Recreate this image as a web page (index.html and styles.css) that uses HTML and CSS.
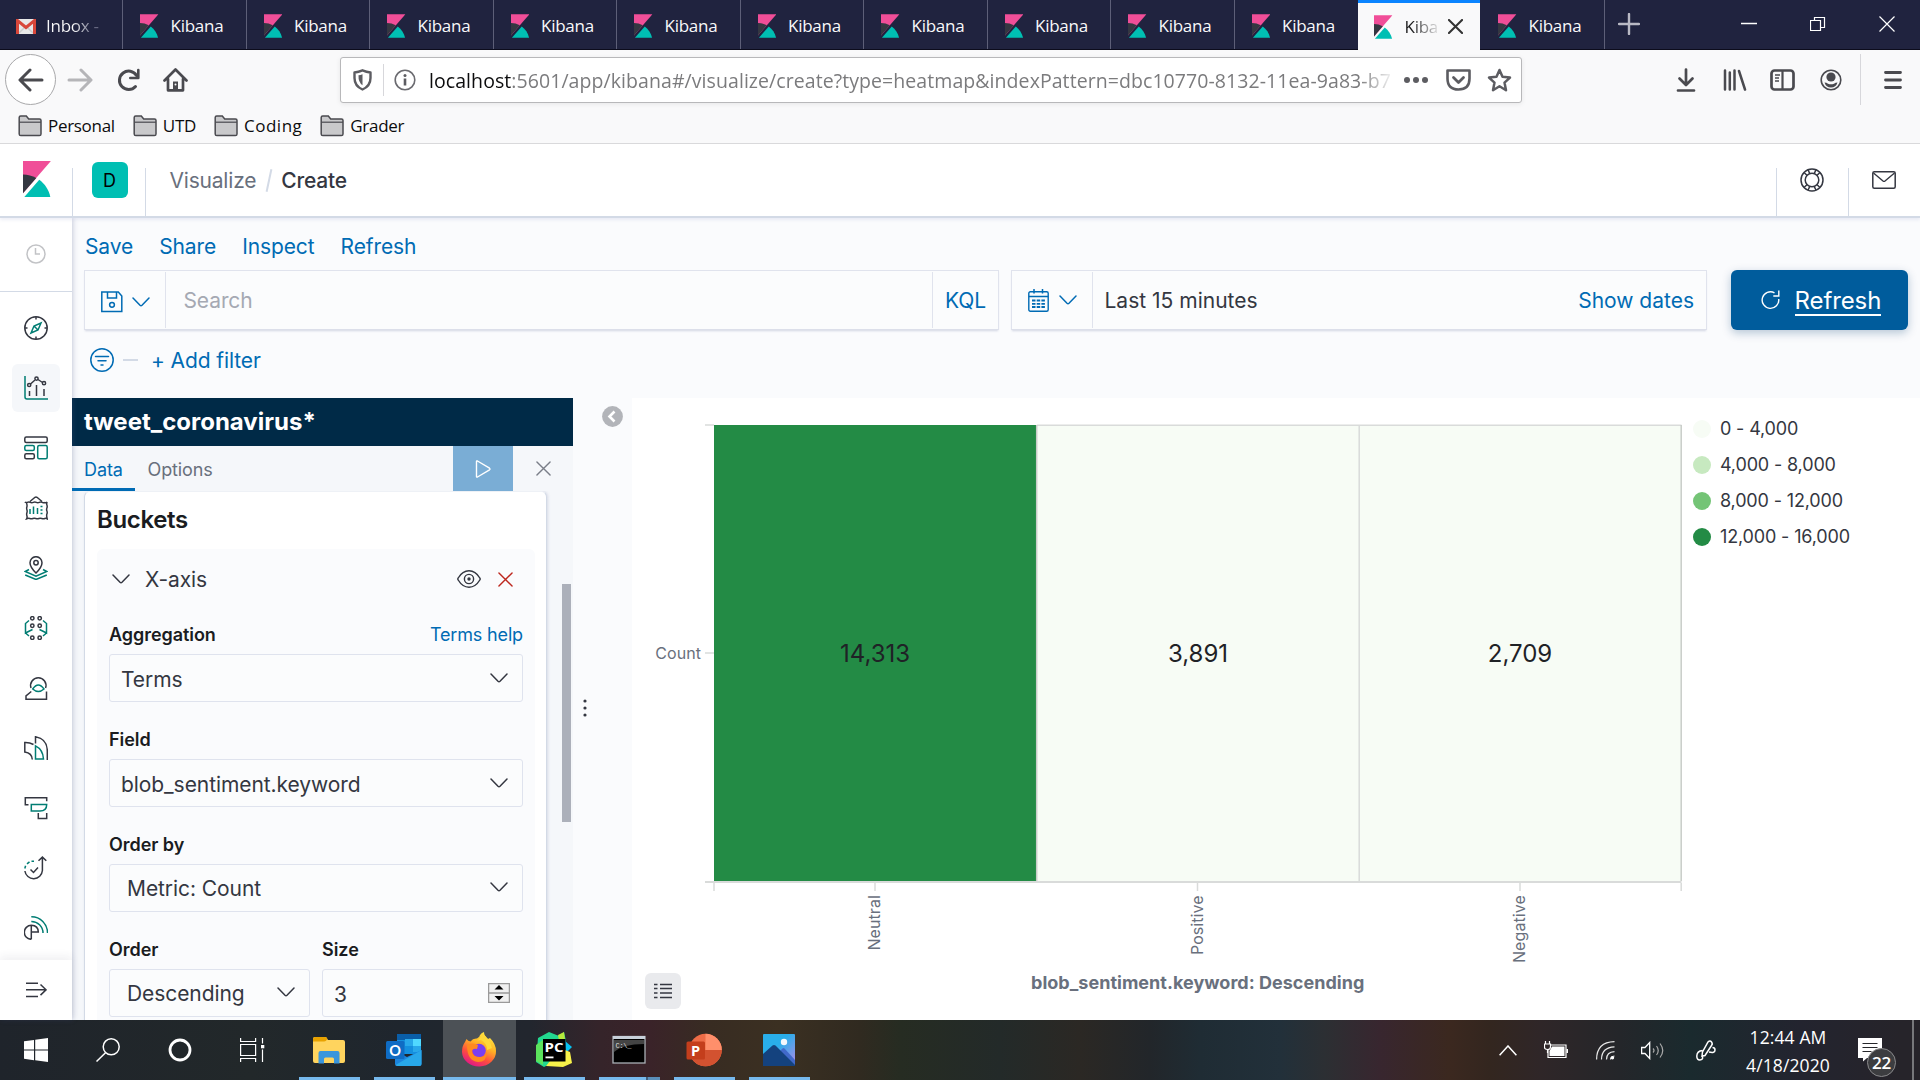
FILE: index.html
```html
<!DOCTYPE html>
<html lang="en">
<head>
<meta charset="utf-8">
<title>Create - Kibana</title>
<link rel="stylesheet" href="styles.css">
</head>
<body>
<svg width="0" height="0" class="defs" aria-hidden="true">
  <symbol id="kibana" viewBox="4 0 25 32">
    <path fill="#f04e98" d="M4 0v28.8L28.9 0z"/>
    <path fill="#343741" d="M4 12v16.8l11.9-13.7A24.7 24.7 0 0 0 4 12"/>
    <path fill="#00bfb3" d="M18.500 16.700 5.200 32h23.200c-1.300-6.300-4.900-11.700-9.900-15.300"/>
  </symbol>
  <symbol id="folder" viewBox="0 0 24 22">
    <path d="M1.200 19V2.500q0-1.500 1.500-1.500h5.600l2.400 3H21.500q1.500 0 1.500 1.500V19q0 1.600-1.600 1.600H2.800Q1.200 20.600 1.200 19Z" fill="#c9c9cb" stroke="#4a4a4f" stroke-width="1.500"/>
    <path d="M1.500 7.200H23" stroke="#4a4a4f" stroke-width="1.200"/>
  </symbol>
  <symbol id="chev" viewBox="0 0 18 10"><path d="M1 1l7 7.300q1 .9 2 0L17 1" fill="none" stroke="currentColor" stroke-width="1.500" stroke-linecap="round"/></symbol>
  <symbol id="cross" viewBox="0 0 16 16"><path d="M1 1l14 14M15 1L1 15" fill="none" stroke="currentColor" stroke-linecap="round"/></symbol>
</svg>

<header class="tabs">
  <div class="tab first"><svg class="gm" viewBox="0 0 20 15"><rect width="20" height="15" rx="1" fill="#e8e8e8"/><path d="M3 14l7-7 7 7" fill="none" stroke="#ccc"/><path d="M1.500 15V1.500L10 8.500l8.500-7V15" fill="none" stroke="#d8473a" stroke-width="3"/></svg><span class="fade">Inbox -</span></div>
  <div class="tab"><svg><use href="#kibana"/></svg><span>Kibana</span></div>
  <div class="tab"><svg><use href="#kibana"/></svg><span>Kibana</span></div>
  <div class="tab"><svg><use href="#kibana"/></svg><span>Kibana</span></div>
  <div class="tab"><svg><use href="#kibana"/></svg><span>Kibana</span></div>
  <div class="tab"><svg><use href="#kibana"/></svg><span>Kibana</span></div>
  <div class="tab"><svg><use href="#kibana"/></svg><span>Kibana</span></div>
  <div class="tab"><svg><use href="#kibana"/></svg><span>Kibana</span></div>
  <div class="tab"><svg><use href="#kibana"/></svg><span>Kibana</span></div>
  <div class="tab"><svg><use href="#kibana"/></svg><span>Kibana</span></div>
  <div class="tab last-dark"><svg><use href="#kibana"/></svg><span>Kibana</span></div>
  <div class="tab active"><svg><use href="#kibana"/></svg><span class="cut">Kibana</span><svg class="x"><use href="#cross"/></svg></div>
  <div class="tab end"><svg><use href="#kibana"/></svg><span>Kibana</span></div>
  <svg class="plus" viewBox="0 0 22 22"><path d="M11 1v20M1 11h20" stroke="#b9b9c4" stroke-width="2.400" stroke-linecap="round"/></svg>
  <div class="winctl">
    <svg width="16" height="16" viewBox="0 0 16 16"><path d="M0 7.500h16" stroke="#fff"/></svg>
    <svg width="16" height="16" viewBox="0 0 16 16"><path d="M.5 4.500h10v10H.5zM4.500 4.500v-3h10v10h-4" fill="none" stroke="#fff" stroke-width="1.200"/></svg>
    <svg width="16" height="16" viewBox="0 0 16 16"><path d="M.5 .5l15 15M15.500 .5l-15 15" stroke="#fff" stroke-width="1.200"/></svg>
  </div>
</header>

<div class="chrome">
  <div class="toolbar">
    <div class="back"><svg width="26" height="24" viewBox="0 0 26 24"><path d="M12 2L2 12l10 10M2.500 12H24" fill="none" stroke="#4a4a4f" stroke-width="3" stroke-linecap="round" stroke-linejoin="round"/></svg></div>
    <svg class="fwd" width="26" height="24" viewBox="0 0 26 24"><path d="M14 2l10 10-10 10M23.500 12H2" fill="none" stroke="#b5b5b8" stroke-width="3" stroke-linecap="round" stroke-linejoin="round"/></svg>
    <svg class="reload" width="25" height="24" viewBox="0 0 25 24"><path d="M19.500 18.500a9.200 9.200 0 1 1 1-11" fill="none" stroke="#4a4a4f" stroke-width="3" stroke-linecap="round"/><path d="M22.300 2v8h-8" fill="none" stroke="#4a4a4f" stroke-width="2.600" stroke-linecap="round" stroke-linejoin="round"/></svg>
    <svg class="home" width="25" height="24" viewBox="0 0 25 24"><path d="M1.500 12.500L12.500 1.500l11 11M5 11v11.300h15V11" fill="none" stroke="#4a4a4f" stroke-width="2.700" stroke-linecap="round" stroke-linejoin="round"/><path d="M10 22v-8.500h5V22z" fill="#4a4a4f"/><circle cx="12.500" cy="16.500" r="1" fill="#f9f9fa"/></svg>
    <div class="url">
      <svg class="shield" width="19" height="22" viewBox="0 0 19 22"><path d="M1.500 3.500Q5.500 3 9.500 1.300 13.500 3 17.500 3.500V9q0 8-8 11.500Q1.500 17 1.500 9Z" fill="none" stroke="#5c5c61" stroke-width="2.400" stroke-linejoin="round"/><path d="M9.500 5.200q-2 .9-4 1.100-.3 7 4 10z" fill="#5c5c61"/></svg>
      <i></i>
      <svg class="info" width="22" height="22" viewBox="0 0 22 22"><circle cx="11" cy="11" r="9.800" fill="none" stroke="#6b6b70" stroke-width="1.600"/><circle cx="11" cy="6.400" r="1.500" fill="#5c5c61"/><path d="M11 9.500v7" stroke="#5c5c61" stroke-width="2.600"/></svg>
      <div class="addr"><b>localhost</b>:5601/app/kibana#/visualize/create?type=heatmap&amp;indexPattern=dbc10770-8132-11ea-9a83-b7</div>
      <svg class="dots" width="26" height="8" viewBox="0 0 26 8"><g fill="#5c5c61"><circle cx="4" cy="4" r="3"/><circle cx="13" cy="4" r="3"/><circle cx="22" cy="4" r="3"/></g></svg>
      <svg class="pocket" width="25" height="22" viewBox="0 0 25 22"><path d="M1.500 1.500h22v8q0 11-11 11t-11-11z" fill="none" stroke="#5c5c61" stroke-width="2.600" stroke-linejoin="round"/><path d="M7.500 8.500l5 5 5-5" fill="none" stroke="#5c5c61" stroke-width="2.800" stroke-linecap="round" stroke-linejoin="round"/></svg>
      <svg class="star" width="25" height="24" viewBox="0 0 25 24"><path d="M12.500 2l3 6.800 7.500.8-5.500 5 1.500 7.600-6.500-3.900L6 22.200l1.500-7.600L2 9.600l7.500-.8z" fill="none" stroke="#5c5c61" stroke-width="2.500" stroke-linejoin="round"/></svg>
    </div>
    <div class="tools">
      <svg width="20" height="24" viewBox="0 0 20 24"><path d="M10 1.500v15M3.500 10.500l6.500 6.500 6.500-6.500M2 22.500h16" fill="none" stroke="#4a4a4f" stroke-width="2.700" stroke-linecap="round" stroke-linejoin="round"/></svg>
      <svg width="24" height="22" viewBox="0 0 24 22"><path d="M2 1.500v19M6.800 3.500v17M11.500 1.500v19M16 2l6 18.500" fill="none" stroke="#4a4a4f" stroke-width="2.500" stroke-linecap="round"/></svg>
      <svg width="25" height="22" viewBox="0 0 25 22"><rect x="1.500" y="1.500" width="22" height="19" rx="3" fill="none" stroke="#4a4a4f" stroke-width="2.700"/><path d="M12.500 1v20" stroke="#4a4a4f" stroke-width="2.200"/><path d="M5 6h5M5 9h4M5 12h4" stroke="#4a4a4f" stroke-width="1.400"/></svg>
      <svg width="22" height="22" viewBox="0 0 22 22"><circle cx="11" cy="11" r="9.800" fill="none" stroke="#4a4a4f" stroke-width="1.600"/><circle cx="11" cy="8" r="4.600" fill="#4a4a4f"/><path d="M4.500 13.500q2 0 3.500 1.200 3 1.300 6 0 1.500-1.200 3.500-1.200-1.500 5-6.500 5t-6.500-5z" fill="#4a4a4f"/></svg>
      <i></i>
      <svg width="18" height="20" viewBox="0 0 18 20"><path d="M1.500 2.500h15M1.500 10h15M1.500 17.500h15" stroke="#4a4a4f" stroke-width="2.800" stroke-linecap="round"/></svg>
    </div>
  </div>
  <div class="bookmarks">
    <div class="bm"><svg><use href="#folder"/></svg><span>Personal</span></div>
    <div class="bm"><svg><use href="#folder"/></svg><span>UTD</span></div>
    <div class="bm wide"><svg><use href="#folder"/></svg><span>Coding</span></div>
    <div class="bm"><svg><use href="#folder"/></svg><span>Grader</span></div>
  </div>
</div>

<div class="khead">
  <div class="klogo"><svg><use href="#kibana"/></svg></div>
  <div class="space"><span>D</span></div>
  <div class="crumbs"><span class="c1">Visualize</span><em></em><span class="c2">Create</span></div>
  <div class="hbtn"><svg width="24" height="24" viewBox="0 0 24 24"><g fill="none" stroke="#343741" stroke-width="1.500"><circle cx="12" cy="12" r="11"/><circle cx="12" cy="12" r="6.800"/><path d="M8 1.800l1.800 3.800M4 4.500l3.200 3M16 1.800l-1.800 3.800M20 4.500l-3.200 3M4 19.500l3.200-3M8 22.200l1.800-3.800M20 19.500l-3.200-3M16 22.200l-1.800-3.800"/></g></svg></div>
  <div class="hbtn"><svg width="24" height="18" viewBox="0 0 24 18"><rect x=".8" y=".8" width="22.400" height="16.400" rx="1.500" fill="none" stroke="#343741" stroke-width="1.500"/><path d="M1.500 2l9.500 8q1 .8 2 0l9.500-8" fill="none" stroke="#343741" stroke-width="1.400"/></svg></div>
</div>

<div class="app">
  <nav class="side">
    <div class="recent"><svg width="20" height="20" viewBox="0 0 20 20"><circle cx="10" cy="10" r="9" fill="none" stroke="#c2c3c6" stroke-width="1.500"/><path d="M9.500 4v6h4.500" fill="none" stroke="#c2c3c6" stroke-width="1.500"/></svg></div>
    <div class="navs">
      <a><svg viewBox="0 0 24 24"><circle cx="12" cy="12" r="11.200"/><path d="M12 1v2.500M12 20.500V23M1 12h2.500M20.500 12H23"/><path class="t" d="M17 7l-3 7-7 3 3-7zM10 10l4 4"/></svg></a>
      <a class="on"><svg viewBox="0 0 24 24"><path class="t" d="M1 0v21q0 2 2 2h21"/><path d="M5.500 15v5M12.500 9v11M20 13v7M6.500 8l4.500-4M14 3.500l4.500 3"/><circle cx="5.200" cy="9" r="1.600"/><circle cx="12.500" cy="2.600" r="1.600"/><circle cx="20" cy="7.200" r="1.600"/></svg></a>
      <a><svg viewBox="0 0 24 24"><rect x=".8" y="1" width="22.400" height="5.500" rx="1.500"/><rect class="t" x=".8" y="9.500" width="9.500" height="5" rx="1.500"/><rect x=".8" y="17.800" width="9.500" height="5" rx="1.500"/><rect class="t" x="13.700" y="9.500" width="9.500" height="13.300" rx="1.500"/></svg></a>
      <a><svg viewBox="0 0 24 24"><path d="M.8 6q1.200 1 2.500.300 1.500-.8 3 0t3 0 3 0 3 0 3 0 2.500.3q1.200.3 2.400-.6-.9 1.500-.3 3t0 3 0 3 0 3 .3 4.800q-1.200-.8-2.400-.3t-3 0-3 0-3 0-3 0-3 0-3.200.3q.8-1.500.300-3t0-3 0-3 0-3-.6-4.500M6 5.500l5-4.200q1-.8 2 0l5 4.200"/><path class="t" d="M6 13v5M9.500 10.500V18M13.500 12v6M16.500 10.500h2M16.500 14h2M16.500 17.500h2"/></svg></a>
      <a><svg viewBox="0 0 24 24"><path d="M12 17Q6 11 6 6.700a6 6 0 0 1 12 0Q18 11 12 17z"/><circle cx="12" cy="6.800" r="2.200"/><path class="t" d="M5 13.500L1.200 15.500 12 20.200l10.800-4.700L19 13.500M1.200 19L12 23.500 22.800 19"/></svg></a>
      <a><svg viewBox="0 0 24 24"><circle cx="8.300" cy="2.300" r="1.700"/><circle cx="15.700" cy="2.300" r="1.700"/><circle cx="8.300" cy="9.700" r="1.700"/><circle cx="15.700" cy="9.700" r="1.700"/><circle cx="8.300" cy="21.700" r="1.700"/><circle cx="15.700" cy="21.700" r="1.700"/><path class="t" d="M5 4.500L1.500 7.500V17l7-3.500M1.500 17L5 20M19 4.500l3.500 3V17l-7-3.500M22.500 17L19 20"/></svg></a>
      <a><svg viewBox="0 0 24 24"><path d="M7 12a7.700 7.700 0 1 1 14.600 0M7.300 15.500L2 19.800v3.400h20.500V15.500"/><path class="t" d="M8.700 13q5.600-8 11.300 0-5.700 5-11.300 0z"/></svg></a>
      <a><svg viewBox="0 0 24 24"><path d="M9.500 8.500Q5.500 6.300 .8 6.500V16Q8 17 8.300 23.500M11.500 7.500V.8Q23.300 3 23.300 15v9"/><path class="t" d="M11.500 9.800Q19 13.500 19.500 23h-8z"/></svg></a>
      <a><svg viewBox="0 0 24 24"><path d="M4.500 8.700H1.300V1.700H22.700V5.200M14.300 17v5.500h8.400V17"/><path class="t" d="M7.300 8.500h15.400q0 6.500-6.700 6.500H7.300z"/></svg></a>
      <a><svg viewBox="0 0 24 24"><path d="M14.500 4.800l3.900-3.700 3.900 3.700M18.400 1.500v13A8.800 8.800 0 0 1 .9 15M6.500 13.500l3 3 4.500-5"/><path class="t" d="M.8 12.500l.8-2.800M3 7.800l2.500-2M7.500 5.200H10"/></svg></a>
      <a><svg viewBox="0 0 24 24"><path d="M7.300 9.300a7 7 0 1 0 0 14M7.300 9.300v14M7.300 9.300q7 .3 7 6.800h-7"/><path class="t" d="M7.300.8A16 16 0 0 1 23.500 17M7.300 5.500A11.500 11.500 0 0 1 19 17"/></svg></a>
    </div>
    <div class="collapse"><svg width="22" height="16" viewBox="0 0 22 16"><path d="M1 1.200h12M1 7.800h20M1 14.500h12M15.500 2.500l5.500 5.300-5.500 5.300" fill="none" stroke="#343741" stroke-width="1.500"/></svg></div>
  </nav>

  <main>
    <div class="menu"><a>Save</a><a>Share</a><a>Inspect</a><a>Refresh</a></div>
    <div class="query">
      <div class="box search">
        <div class="pre"><svg class="sv" width="22" height="22" viewBox="0 0 22 22"><path d="M.8 1h16.500l3.500 4v15.500H.8zM6.500 1v6h9V1" fill="none" stroke="#006bb4" stroke-width="1.500"/><circle cx="11" cy="13.800" r="2.400" fill="none" stroke="#006bb4" stroke-width="1.500"/></svg><svg class="ch"><use href="#chev"/></svg></div>
        <div class="ph">Search</div>
        <div class="kql">KQL</div>
      </div>
      <div class="box date">
        <div class="pre"><svg class="cal" width="21" height="23" viewBox="0 0 21 23"><rect x=".8" y="2.800" width="19.400" height="19.400" rx="1.500" fill="none" stroke="#006bb4" stroke-width="1.400"/><path d="M.8 7.500h19.400M6 0v4.500M14.500 0v4.500" stroke="#006bb4" stroke-width="1.500"/><path d="M4 11.500h13M4 14.800h13M4 18h13" stroke="#006bb4" stroke-width="1.800" stroke-dasharray="3.500 1.200"/></svg><svg class="ch"><use href="#chev"/></svg></div>
        <div class="rng">Last 15 minutes</div>
        <div class="show">Show dates</div>
      </div>
      <button class="go"><svg width="19" height="20" viewBox="0 0 19 20"><path d="M13.500 2.800A8.300 8.300 0 1 0 17.700 9M17.800 .5v5.500h-5.500" fill="none" stroke="#fff" stroke-width="1.400"/></svg><span>Refresh</span></button>
    </div>
    <div class="filter"><svg width="24" height="24" viewBox="0 0 24 24"><g fill="none" stroke="#006bb4" stroke-width="1.500" stroke-linecap="round"><circle cx="12" cy="12" r="11.200"/><path d="M5.500 8.500h13M8 12.800h8M11 17h2"/></g></svg><i></i><a>+ Add filter</a></div>

    <div class="work">
      <section class="editor">
        <h1>tweet_coronavirus*</h1>
        <div class="etabs"><a class="sel">Data</a><a class="opt">Options</a><div class="play"><svg width="16" height="18" viewBox="0 0 16 18"><path d="M1.500 1.500q0-1 1-.5l12 7.200q1 .8 0 1.600l-12 7.200q-1 .5-1-.5z" fill="none" stroke="#fff" stroke-width="1.400"/></svg></div><svg class="cl"><use href="#cross"/></svg></div>
        <div class="ebody">
          <div class="card">
            <h2>Buckets</h2>
            <div class="agg">
              <div class="ah"><svg class="ch"><use href="#chev"/></svg><span>X-axis</span><svg class="eye" width="24" height="18" viewBox="0 0 24 18"><g fill="none" stroke="#343741" stroke-width="1.400"><path d="M1.200 10q-.8-1 0-2Q5.500 .8 12 .8t10.800 7.200q.8 1 0 2-4.300 7.200-10.800 7.200T1.200 10z"/><circle cx="12" cy="9" r="4.600"/></g><circle cx="12" cy="9" r="1.700" fill="#343741"/></svg><svg class="del"><use href="#cross"/></svg></div>
              <div class="lab"><b>Aggregation</b><a>Terms help</a></div>
              <div class="sel1"><span>Terms</span><svg class="ch"><use href="#chev"/></svg></div>
              <div class="lab"><b>Field</b></div>
              <div class="sel1"><span>blob_sentiment.keyword</span><svg class="ch"><use href="#chev"/></svg></div>
              <div class="lab"><b>Order by</b></div>
              <div class="sel1 nat"><span>Metric: Count</span><svg class="ch"><use href="#chev"/></svg></div>
              <div class="two">
                <div><div class="lab"><b>Order</b></div><div class="sel1 nat"><span>Descending</span><svg class="ch"><use href="#chev"/></svg></div></div>
                <div><div class="lab"><b>Size</b></div><div class="sel1 num"><span>3</span><svg width="22" height="20" viewBox="0 0 22 20"><rect x=".5" y=".5" width="21" height="19" fill="#f0f0f0" stroke="#9a9a9a"/><path d="M0 10h22" stroke="#9a9a9a" stroke-width="1.500"/><path d="M6.500 6.500L11 2l4.500 4.500zM6.500 13L11 17.500 15.500 13z" fill="#000"/></svg></div></div>
              </div>
            </div>
          </div>
          <div class="thumb"></div>
        </div>
      </section>
      <div class="gutter"><svg class="coll" width="21" height="21" viewBox="0 0 21 21"><circle cx="10.500" cy="10.500" r="10.400" fill="#b2b4b9"/><path d="M12.500 5.500l-5 5 5 5" fill="none" stroke="#fff" stroke-width="2.600"/></svg><svg class="grip" width="4" height="18" viewBox="0 0 4 18"><g fill="#343741"><circle cx="2" cy="2" r="1.600"/><circle cx="2" cy="9" r="1.600"/><circle cx="2" cy="16" r="1.600"/></g></svg></div>
      <section class="vis">
        <svg class="chart" width="1050" height="622" viewBox="632 398 1050 622">
          <rect x="714" y="425" width="323" height="456" fill="#238b45"/>
          <rect x="1037" y="425" width="644.500" height="456" fill="#f7fcf5"/>
          <g stroke="#d9dbda" stroke-width="1.500" fill="none">
            <path d="M705 425h9M705 653h9M1359.200 425v456M714 883v8M875 883v8M1197.500 883v8M1520 883v8M1681.200 883v8"/>
            <path d="M1037 425.300h644.500"/>
            <path stroke="#c9cdc9" d="M1681.200 425v456M1036.700 425v456"/>
            <path stroke-width="2" d="M705 882h976.500"/>
          </g>
          <g class="ax">
            <text x="701" y="659" text-anchor="end">Count</text>
            <text transform="translate(880 950.500) rotate(-90)">Neutral</text>
            <text transform="translate(1203 955) rotate(-90)">Positive</text>
            <text transform="translate(1525 963) rotate(-90)">Negative</text>
          </g>
          <g class="val" text-anchor="middle">
            <text x="875" y="662">14,313</text><text x="1198" y="662">3,891</text><text x="1520" y="662">2,709</text>
          </g>
          <text class="ttl" x="1197.700" y="989" text-anchor="middle">blob_sentiment.keyword: Descending</text>
        </svg>
        <ul class="legend">
          <li><i style="background:#f7fcf5"></i><span>0 - 4,000</span></li>
          <li><i style="background:#c7e9c0"></i><span>4,000 - 8,000</span></li>
          <li><i style="background:#74c476"></i><span>8,000 - 12,000</span></li>
          <li><i style="background:#238b45"></i><span>12,000 - 16,000</span></li>
        </ul>
        <div class="lbtn"><svg width="18" height="16" viewBox="0 0 18 16"><path d="M0 1.500h3.500M6 1.500h12M0 5.500h3.500M6 5.500h12M0 10h3.500M6 10h12M0 14.500h3.500M6 14.500h12" stroke="#343741" stroke-width="1.300"/></svg></div>
      </section>
    </div>
  </main>
</div>

<footer class="task">
  <div class="sys"><svg width="24" height="24" viewBox="0 0 24 24"><path fill="#fff" d="M0 3.300l10-1.400V11.500H0zM11.200 1.700L24 0v11.500H11.200zM0 12.600h10v9.600L0 20.800zM11.200 12.600H24V24l-12.800-1.700z"/></svg></div>
  <div class="sys"><svg width="24" height="24" viewBox="0 0 24 24"><g fill="none" stroke="#fff" stroke-width="1.500"><circle cx="15.200" cy="8.800" r="8"/><path d="M9.500 14.800L.5 23.500"/></g></svg></div>
  <div class="sys"><svg width="24" height="24" viewBox="0 0 24 24"><circle cx="12" cy="12" r="10" fill="none" stroke="#fff" stroke-width="2.800"/></svg></div>
  <div class="sys"><svg width="25" height="24" viewBox="0 0 25 24"><g fill="none" stroke="#fff" stroke-width="1.200"><path d="M.6 6.500h15v11H.6zM.6 0v3.500h15V0M.6 24v-3.500h15V24M22.500 0v5.500M22.500 11.500V24"/></g><rect x="21" y="7" width="3.300" height="3.300" fill="#fff"/></svg></div>
  <div class="apps">
    <div><svg width="36" height="36" viewBox="0 0 36 36"><path d="M2 7q0-2 2-2h11l2 3h15q2 0 2 2v19q0 2-2 2H4q-2 0-2-2z" fill="#ffd45e"/><path d="M2 9.500V7q0-2 2-2h10.500q1 0 1.800 1.500Q15.500 9.500 13 9.500z" fill="#e8a200"/><path d="M7.500 31.500V21q0-2 2-2h17q2 0 2 2v10.500H23V27q0-1.500-1.500-1.500h-7Q13 25.500 13 27v4.500z" fill="#3a96dd"/></svg></div>
    <div><svg width="36" height="36" viewBox="0 0 36 36"><rect x="11" y="2" width="24" height="20" fill="#1490df"/><rect x="11" y="2" width="24" height="6" fill="#0a5ea8"/><rect x="19" y="7" width="8" height="7" fill="#28a8ea"/><rect x="27" y="7" width="8" height="7" fill="#50d9ff"/><rect x="27" y="14" width="8" height="6" fill="#28a8ea"/><path d="M35.500 18v14q0 2-2 2H11q-2 0-2-2V19l12 6z" fill="#1c84dc"/><path d="M9.500 33L35.500 18v14q0 2-2 2H11z" fill="#28a8ea"/><rect y="9" width="18.500" height="18" rx="1.500" fill="#0f6cc4"/><text x="9.200" y="23.500" text-anchor="middle" font-size="14.500" font-weight="700" fill="#fff" font-family="Lato, sans-serif">O</text></svg></div>
    <div class="cur"><svg width="36" height="36" viewBox="0 0 36 36"><defs><linearGradient id="ff" x1=".8" y1="0" x2=".3" y2="1"><stop offset="0" stop-color="#fff14a"/><stop offset=".4" stop-color="#ffb224"/><stop offset=".7" stop-color="#ff4f3c"/><stop offset="1" stop-color="#e0158a"/></linearGradient></defs><path d="M4 10l1.500-3q1.500 2 4 2.500Q12 6 16 6.500q3-2 3-3.500 2-2.500 4-3 0 4 4 7l2-1q6 6 6 13a17 15 0 0 1-34 1Q1 14 4 10z" fill="url(#ff)"/><circle cx="18" cy="18.500" r="6.800" fill="#7a3ff0"/><path d="M6 13q6-3 11 0l-1 4q-5-1-5 3 1 5 8 5 5 0 7-5 0 10-9 10Q6 29 6 13z" fill="#ff8a1f"/><path d="M21 1q8 6 10 15l-5 2q0-7-6-10-3 0-4 1 4-3 5-8z" fill="#ffd93a"/></svg></div>
    <div><svg width="36" height="36" viewBox="0 0 36 36"><path d="M2 6L13 0l10 4 5-4 2 9-14 22-8 4-8-5z" fill="#22d88f"/><path d="M0 13L7 8v25L0 29z" fill="#5be35c"/><path d="M22 3l6-3 1 8-6 1z" fill="#b6ea3c"/><path d="M29 9l7 6-6 6z" fill="#07c3f2"/><path d="M29 18l5 2 2 11-9 4-17-1 4-5z" fill="#f7f14a"/><rect x="7" y="7" width="22.500" height="22.500" fill="#000"/><text x="8.500" y="19.500" font-size="13" font-weight="700" fill="#fff" textLength="19" lengthAdjust="spacingAndGlyphs" font-family="Open Sans, sans-serif">PC</text><rect x="9.500" y="24.500" width="8" height="1.800" fill="#fff"/></svg></div>
    <div class="multi"><svg width="36" height="36" viewBox="0 0 36 36"><rect x="2" y="4.500" width="32" height="26.500" fill="#000" stroke="#aab0b6" stroke-width="1.300"/><rect x="2" y="4" width="32" height="3" fill="#c8d0da"/><path d="M3 8h30v4Q12 12 3 20z" fill="#444"/><text x="4.500" y="15.500" font-size="7" fill="#ddd" textLength="16" font-family="Liberation Mono, monospace">C:\_</text></svg></div>
    <div><svg width="36" height="36" viewBox="0 0 36 36"><circle cx="19.500" cy="18" r="16.300" fill="#ed6c47"/><path d="M19.500 1.700A16.300 16.300 0 0 1 35.800 18H19.500z" fill="#ff8f6b"/><path d="M3.200 18h32.600a16.300 16.300 0 0 1-32.600 0z" fill="#d35230"/><rect x=".5" y="9.500" width="18.500" height="18" rx="1.500" fill="#c43e1c"/><text x="9.500" y="23.500" text-anchor="middle" font-size="14.500" font-weight="700" fill="#fff" font-family="Open Sans, sans-serif">P</text></svg></div>
    <div><svg width="36" height="36" viewBox="0 0 36 36"><defs><linearGradient id="ph" x1="0" y1="0" x2="1" y2="1"><stop offset=".4" stop-color="#29aeea"/><stop offset=".9" stop-color="#9a8fe8"/></linearGradient></defs><rect x="2" y="2" width="32" height="32" rx="1" fill="url(#ph)"/><path d="M18 20l3.500-3.500q1-1 2 0L34 28v6H18z" fill="#4169c9"/><path d="M2 22l9.500-8.500q1.500-1 3 0L34 33v1H2z" fill="#14427e"/><circle cx="23" cy="10" r="3.200" fill="#f4f8fc"/></svg></div>
  </div>
  <div class="tray">
    <svg class="t1" width="18" height="11" viewBox="0 0 18 11"><path d="M.6 10.300L9 1l8.400 9.300" fill="none" stroke="#fff" stroke-width="1.500"/></svg>
    <svg class="t2" width="24" height="18" viewBox="0 0 24 18"><path d="M7 4h15v12.500H4V9" fill="none" stroke="#fff" stroke-width="1.200"/><path d="M8 5.500h12.500V15h-15V10z" fill="#fff"/><rect x="22.500" y="8" width="1.500" height="4" fill="#fff"/><path d="M1.500 0v3M5.500 0v3M.5 3h6v3q0 2.500-3 2.500T.5 6zM3.500 8.500V12" fill="none" stroke="#fff" stroke-width="1.200"/></svg>
    <svg class="t3" width="19" height="19" viewBox="0 0 19 19"><g fill="none" stroke="#e8e8e8" stroke-width="1.200"><path d="M.6 18.500Q.6 1 18.500 .6M5.500 18.500q0-12 13-12.600M10.500 18.500q0-7.500 8-7.800M14.500 18.500q0-3 4-3.500"/></g><circle cx="16.500" cy="16.800" r="1.700" fill="#fff"/></svg>
    <svg class="t4" width="23" height="19" viewBox="0 0 23 19"><path d="M.6 6.500v6H4l4.700 5V1.500L4 6.500z" fill="none" stroke="#fff" stroke-width="1.300"/><path d="M12 7.500q2 2 0 4M15.500 5q3.500 4.500 0 9M19 2.500q5.500 7 0 14" fill="none" stroke="#aaa" stroke-width="1.200"/></svg>
    <svg class="t5" width="20" height="21" viewBox="0 0 20 21"><path d="M6.500 10.500Q1 11 .8 16q0 4 3 4 3.500-.5 2.700-3l-.5-1M6 16l.5-4L12 2q2-2 3.500 0t0 3.500L9 15.500zM13 12q6 1.500 6-2 0-2.500-2.500-2.500" fill="none" stroke="#fff" stroke-width="1.500"/></svg>
    <div class="clock"><span>12:44 AM</span><span>4/18/2020</span></div>
    <div class="note"><svg width="24" height="24" viewBox="0 0 24 24"><path d="M0 0h24v20H9l-4 3.500V20H0z" fill="#fff"/><path d="M4.500 5.500h15M4.500 9.500h15M4.500 13.500h9" stroke="#26272b" stroke-width="1.200"/></svg><b>22</b></div>
    <i class="desk"></i>
  </div>
</footer>
</body>
</html>
```
FILE: styles.css
```css
* { box-sizing: border-box; }
html, body { margin: 0; width: 1920px; height: 1080px; overflow: hidden; }
body { display: flex; flex-direction: column; font: 21px/30px Inter, "Liberation Sans", sans-serif; letter-spacing: -.005em; color: #343741; background: #fafbfd; }
svg { display: block; flex: none; stroke-width: 1.5; }
.defs { position: absolute; }
h1, h2, ul { margin: 0; padding: 0; }
b { font-weight: 600; }

/* browser tabs */
.tabs { height: 50px; flex: none; display: flex; background: #20233f; border-bottom: 1px solid #0c0c1c; font: 17px/24px "Open Sans", sans-serif; letter-spacing: -.25px; color: #f9f9fa; }
.tab { width: 123.5px; height: 49px; padding: 1px 0 0 17px; display: flex; align-items: center; gap: 12px; border-right: 1px solid #5d5f78; white-space: nowrap; }
.tab svg { width: 18.5px; height: 24px; margin-top: 2px; }
.tab span { padding-top: 2px; }
.tab.first { width: 123px; padding-left: 16px; gap: 10px; }
.tab.end { width: 124.5px; padding-left: 18px; }
.tab .gm { width: 20px; height: 15px; }
.fade { background: linear-gradient(90deg, #f9f9fa 50%, #666880 90%); -webkit-background-clip: text; color: transparent; }
.tab.last-dark { border-right: 0; }
.tab.active { width: 122px; height: 50px; background: #f9f9fa; border: 0; border-top: 3px solid #0a84ff; padding: 0 0 2px 16px; color: #0c0c0d; }
.tab .cut { width: 34px; background: linear-gradient(90deg, #1a1a1b 20%, #e8e8e9 100%); -webkit-background-clip: text; color: transparent; }
.tab svg.x { width: 15px; height: 15px; color: #333; stroke-width: 2.2; margin-left: -3px; }
.plus { width: 22px; height: 22px; margin: 13px 0 0 13px; }
.winctl { display: flex; gap: 53px; margin: 16px 0 0 101px; }

.chrome { height: 94px; flex: none; background: #f9f9fa; border-bottom: 1px solid #dadadb; }
.toolbar { height: 58px; display: flex; align-items: center; padding: 1px 0 0 5px; }
.back { width: 51px; height: 51px; border: 1px solid #a8a8aa; border-radius: 50%; background: #fff; display: grid; place-items: center; flex: none; }
.fwd { margin-left: 11px; }
.reload { margin-left: 23px; }
.home { margin-left: 22px; }
.url { width: 1182px; height: 46px; margin-left: 152px; border: 1px solid #b8b8ba; border-radius: 3px; background: #fff; box-shadow: 0 1px 5px rgba(0,0,0,.08); display: flex; align-items: center; padding-left: 12px; flex: none; }
.url i { width: 1px; height: 32px; background: #d7d7db; margin: 0 10px 0 11px; }
.addr { width: 966px; margin-left: 13px; height: 32px; overflow: hidden; white-space: nowrap; font: 19.5px/33px "Open Sans", sans-serif; letter-spacing: .07px; color: #7b7b7d; -webkit-mask-image: linear-gradient(90deg, #000 930px, transparent 966px); }
.addr b { font-weight: 400; color: #0c0c0d; }
.dots { margin-left: 8px; }
.pocket { margin-left: 17px; }
.star { margin-left: 16px; }
.tools { display: flex; align-items: center; margin-left: 153.5px; }
.tools svg:nth-child(2) { margin-left: 27px; }
.tools svg:nth-child(3) { margin-left: 23px; }
.tools svg:nth-child(4) { margin-left: 25px; }
.tools i { width: 1px; height: 51px; background: #d7d7db; margin: 0 23px 0 18px; }
.bookmarks { display: flex; gap: 18px; padding: 4px 0 0 18px; font: 17px/26px "Open Sans", sans-serif; letter-spacing: -.3px; color: #0c0c0d; }
.bm { display: flex; align-items: center; gap: 6px; }
.bm.wide { letter-spacing: .5px; }
.bm span { padding-top: 1px; }
.bm svg { width: 24px; height: 22px; }

/* application header */
.khead { height: 74px; flex: none; display: flex; background: #fff; border-bottom: 2px solid #d3dae6; box-shadow: 0 2px 3px rgba(105,112,180,.12); position: relative; z-index: 2; }
.klogo { width: 72px; padding: 17px 0 0 23px; }
.klogo svg { width: 28px; height: 36px; }
.space { width: 74px; height: 48px; margin-top: 24px; border: solid #d3dae6; border-width: 0 1.5px; }
.space span { display: block; width: 36px; height: 36px; margin: -6px 0 0 18.5px; border-radius: 6px; background: #00bfb3; color: #000; text-align: center; font-size: 18px; line-height: 37px; }
.crumbs { display: flex; padding: 22px 0 0 23.5px; flex: 1; line-height: 30px; letter-spacing: -.2px; }
.crumbs em { width: 1.5px; height: 23px; background: #d3dae6; transform: rotate(12deg); margin: 3px 11.5px 0 12px; }
.c1 { color: #69707d; }
.c2 { font-weight: 500; }
.hbtn { width: 72px; height: 48px; margin-top: 24px; border-left: 1.5px solid #d3dae6; display: flex; justify-content: center; align-items: flex-start; padding-right: 2px; }
.hbtn:last-child svg { margin-top: 3px; }

.app { height: 802px; flex: none; display: flex; }
.side { width: 72px; background: #fff; box-shadow: 1px 0 5px rgba(70,80,130,.28); position: relative; z-index: 1; display: flex; flex-direction: column; }
.recent { height: 74px; border-bottom: 1px solid #d3dae6; padding: 25.5px 0 0 25.5px; flex: none; }
.navs { height: 668px; padding-top: 12px; flex: none; }
.navs a { display: grid; place-items: center; width: 48px; height: 48px; margin: 0 0 12px 12px; border-radius: 6px; }
.navs .on { background: #f5f7fa; }
.navs svg { width: 24px; height: 24px; fill: none; stroke: #343741; stroke-width: 1.5; }
.navs .t { stroke: #017d73; }
.collapse { height: 60px; padding: 22px 0 0 25px; box-shadow: 0 -4px 8px rgba(50,60,90,.07); }

main { flex: 1; min-width: 0; display: flex; flex-direction: column; }
main a { color: #006bb4; }
.menu { height: 52px; display: flex; gap: 26px; padding: 14px 0 0 13px; flex: none; }
.query { display: flex; height: 60px; padding-left: 12px; flex: none; }
.box { height: 60px; border: 1px solid #e0e3ed; border-bottom-color: #dcdfea; background: #fbfcfd; display: flex; align-items: center; box-shadow: 0 2px 2px -1px rgba(120,130,170,.3); }
.search { width: 915px; }
.pre { width: 81px; height: 56px; border-right: 1px solid #e0e3ed; display: flex; align-items: center; color: #006bb4; flex: none; }
.ch { width: 18px; height: 10px; }
.sv { margin: 3px 9px 0 16px; }
.search .ch { margin-top: 4px; }
.ph { flex: 1; padding: 2px 0 0 17.5px; color: #a5a9b3; }
.kql { width: 66px; height: 56px; line-height: 58px; border-left: 1px solid #e0e3ed; color: #006bb4; padding-left: 12px; }
.date { width: 696px; margin-left: 12px; }
.cal { margin: 0 10px 0 16px; }
.rng { flex: 1; padding: 2px 0 0 11.5px; letter-spacing: 0; }
.show { color: #006bb4; padding: 2px 12px 0 0; letter-spacing: 0; }
.go { width: 177px; height: 60px; margin-left: 24px; border: 0; border-radius: 6px; background: #005c9c; color: #fff; display: flex; align-items: center; padding: 2px 0 0 29.5px; gap: 15px; font: 24px/28px Inter, sans-serif; letter-spacing: -.1px; box-shadow: 0 3px 10px rgba(0,60,110,.28); }
.go svg { margin-top: -3px; }
.go span { line-height: 27px; padding-top: 1px; border-bottom: 2px solid #fff; }
.filter { height: 68px; display: flex; align-items: center; padding: 0 0 8px 18px; flex: none; }
.filter a { padding-top: 2px; }
.filter i { width: 15px; height: 1.5px; background: #d3dae6; margin: 0 13px 0 9px; }

.work { flex: 1; display: flex; min-height: 0; }
.editor { width: 501px; background: #f5f7fa; display: flex; flex-direction: column; }
h1 { height: 48px; background: #002a47; color: #fff; font-size: 24px; line-height: 48px; padding-left: 12px; font-weight: 700; letter-spacing: 0; }
.etabs { height: 45px; display: flex; font-size: 18px; line-height: 48px; position: relative; z-index: 1; }
.etabs .sel { width: 63px; padding-left: 12px; border-bottom: 3px solid #006bb4; }
.etabs .opt { color: #69707d; padding-left: 12.5px; width: 318px; }
.play { width: 60px; display: grid; place-items: center; background: #7aadd5; }
.cl { width: 15px; height: 15px; margin: 15px 0 0 22.5px; color: #7a7e88; }
.ebody { flex: 1; min-height: 0; overflow: hidden; display: flex; padding-left: 12px; }
.card { width: 463px; height: 600px; background: #fff; border: 1px solid #d3dae6; border-top-color: #eef1f6; border-radius: 6px 6px 0 0; padding: 12px 11px 0 12px; box-shadow: 1px 0 3px rgba(100,110,160,.2); flex: none; }
h2 { font-size: 24px; line-height: 32px; color: #1a1c21; font-weight: 600; letter-spacing: -.35px; margin-bottom: 13px; }
.agg { background: #fafbfd; border-radius: 6px; height: 600px; padding: 0 12px; }
.ah { height: 60px; display: flex; align-items: center; padding-left: 3px; }
.ah span { flex: 1; padding: 1px 0 0 15px; }
.del { width: 15px; height: 15px; color: #bd271e; margin: 0 10.5px 0 16.5px; }
.lab { display: flex; justify-content: space-between; font-size: 18px; line-height: 24px; margin-top: 14px; height: 31px; }
.lab b { color: #1a1c21; letter-spacing: -.05px; }
.lab a { letter-spacing: -.15px; }
.sel1 { height: 48px; border: 1px solid #dfe3ee; border-radius: 3px; background: #fbfcfd; display: flex; align-items: center; justify-content: space-between; padding: 3px 14px 0 11px; margin-bottom: 26px; letter-spacing: -.07px; }
.sel1 .ch { margin-top: -4px; }
.sel1.nat { padding-left: 17px; padding-top: 2.5px; }
.sel1.num { padding-right: 12px; }
.sel1.num svg { margin-top: -3px; }
.two { display: grid; grid-template-columns: 201px 201px; gap: 12px; margin-top: -12px; }
.two .lab { margin-top: 12px; }
.thumb { width: 9px; height: 238px; background: #acb0ba; margin: 93px 0 0 15px; }

.gutter { width: 59px; padding-left: 10px; }
.coll { margin: 8px 0 0 18.5px; }
.grip { margin-top: 272px; }
.vis { flex: 1; background: #fff; display: flex; position: relative; }
.ax text { font-size: 16px; fill: #69707d; letter-spacing: .06px; stroke: none; }
.val text { font-size: 24px; fill: #1f2226; letter-spacing: 0; }
.ttl { font-size: 18px; font-weight: 700; fill: #69707d; letter-spacing: .02px; }
.legend { list-style: none; font-size: 18px; line-height: 36px; padding: 12px 0 0 11px; white-space: nowrap; }
.legend li { display: flex; align-items: center; gap: 9px; letter-spacing: -.15px; height: 36px; }
.legend span { padding-top: 2px; }
.legend i { width: 18px; height: 18px; border-radius: 50%; margin-top: 1px; }
.lbtn { position: absolute; left: 13px; top: 575px; width: 36px; height: 36px; border-radius: 6px; background: #e9eaed; display: grid; place-items: center; }

/* taskbar */
.task { height: 60px; flex: none; display: flex; align-items: center; font-family: "Open Sans", sans-serif; letter-spacing: 0; color: #fff; background: linear-gradient(90deg, #1f242b 0, #22282a 250px, #1f262e 400px, #22262e 530px, #35242a 600px, #3a2329 650px, #382c22 710px, #3b3022 780px, #302a20 860px, #262c22 900px, #232a29 1000px, #2b2824 1080px, #22262a 1150px, #1f2c34 1200px, #22303a 1280px, #2c2f33 1325px, #38262f 1380px, #3b281f 1450px, #33261f 1490px, #2f2628 1540px, #24262a 1620px, #1a2a2e 1690px, #23242f 1800px, #26242a 1900px); }
.sys { width: 72px; display: grid; place-items: center; }
.apps { display: flex; height: 60px; margin-left: 4px; }
.apps > div { width: 75px; height: 60px; display: grid; justify-items: center; align-content: space-between; padding-top: 12px; }
.apps svg { margin-left: -2px; }
.apps > div::after { content: ""; width: 61px; height: 3px; background: #76b9ed; }
.apps .cur { background: #4c5156; background-clip: content-box; padding: 0 1px; grid-template-rows: 57px 3px; }
.apps .cur svg { margin-top: 12px; }
.apps .cur::after { width: 73px; }
.apps .multi::after { background: linear-gradient(90deg, #76b9ed 47px, #3f5d7a 47px 49px, #5a8fba 49px); }
.tray { flex: 1; display: flex; align-items: center; padding-left: 682px; height: 60px; }
.t2 { margin-left: 27px; }
.t3 { margin-left: 28px; }
.t4 { margin-left: 26px; }
.t5 { margin-left: 32px; }
.clock { width: 100px; margin: 1px 0 0 22px; display: flex; flex-direction: column; align-items: center; font-size: 17.5px; line-height: 28px; letter-spacing: .1px; white-space: nowrap; }
.note { margin: 0 0 1px 20px; position: relative; width: 54px; }
.note b { position: absolute; left: 9px; top: 10px; width: 29px; height: 29px; border-radius: 50%; background: #3c3d40; border: 1px solid #8a8a8c; font-size: 17px; line-height: 27px; text-align: center; letter-spacing: -.3px; }
.desk { width: 1.5px; height: 60px; background: #77787b; }
```
